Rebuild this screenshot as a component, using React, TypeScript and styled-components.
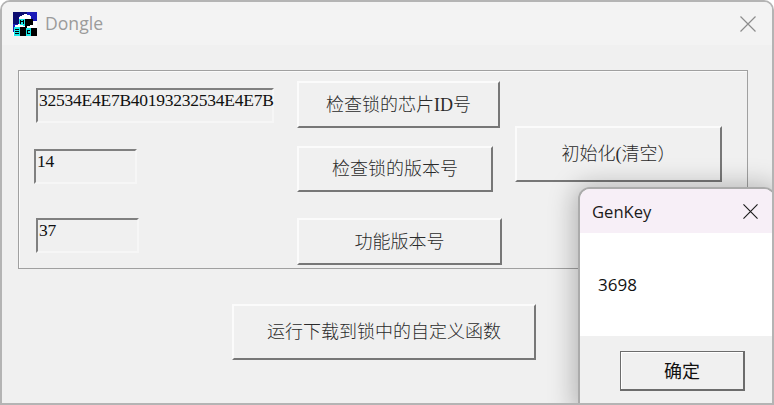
import React from "react";
import styled, { createGlobalStyle } from "styled-components";

const GlobalStyle = createGlobalStyle`
  html, body {
    margin: 0;
    padding: 0;
    background: #fff;
  }
`;

const DIALOG_FONT = `"Liberation Serif", "Noto Sans CJK SC", serif`;
const SYSTEM_FONT = `"Open Sans", "Noto Sans", sans-serif`;

const WindowFrame = styled.div`
  position: relative;
  width: 774px;
  height: 405px;
  box-sizing: border-box;
  overflow: hidden;
  background: #f0f0f0;
  border: 2px solid #b4b4b4;
  border-radius: 10px 10px 0 0;
`;

const TitleBar = styled.div`
  display: flex;
  align-items: center;
  height: 43px;
  padding: 0 16px 0 11px;
  box-sizing: border-box;
  background: #f3f3f3;
`;

const TitleText = styled.span`
  margin: -2px 0 0 8px;
  font-family: ${SYSTEM_FONT};
  font-size: 17.6px;
  color: #9b9b9b;
`;

const CloseButton = styled.button<{ $color: string }>`
  display: flex;
  margin-left: auto;
  padding: 0;
  border: 0;
  background: none;
  color: ${(p) => p.$color};
`;

const Body = styled.div`
  padding: 25px 0 0 16px;
`;

const GroupBox = styled.div`
  display: flex;
  width: 730px;
  height: 199px;
  padding-top: 10px;
  box-sizing: border-box;
  border: 1px solid #a0a0a0;
  box-shadow: inset 1px 1px 0 #fafafa;
`;

const FieldColumn = styled.div`
  display: flex;
  flex-direction: column;
  align-items: flex-start;
  width: 278px;
  padding-top: 7px;
`;

const Field = styled.div<{ $width: number; $indent: number; $gap: number }>`
  width: ${(p) => p.$width}px;
  height: 35px;
  margin: ${(p) => p.$gap}px 0 0 ${(p) => p.$indent}px;
  padding: 0 0 0 1px;
  box-sizing: border-box;
  border-style: solid;
  border-width: 2px;
  border-color: #808080 #f6f6f6 #f6f6f6 #808080;
  font-family: ${DIALOG_FONT};
  font-size: 17.5px;
  letter-spacing: -0.25px;
  line-height: 21px;
  color: #111;
  white-space: nowrap;
`;

const ButtonColumn = styled.div`
  display: flex;
  flex-direction: column;
  align-items: flex-start;
  width: 218px;
`;

const BevelButton = styled.button<{ $width: number; $height: number; $gap?: number }>`
  width: ${(p) => p.$width}px;
  height: ${(p) => p.$height}px;
  margin-top: ${(p) => p.$gap ?? 0}px;
  padding: 0 0 4px;
  box-sizing: border-box;
  background: #f0f0f0;
  border-style: solid;
  border-width: 2px;
  border-color: #fbfbfb #777 #777 #fbfbfb;
  font-family: ${DIALOG_FONT};
  font-size: 18px;
  font-weight: 300;
  color: #2a2a2a;
`;

const RunRow = styled.div`
  padding: 35px 0 0 214px;
`;

const MessageBox = styled.div`
  position: absolute;
  right: -2px;
  bottom: -2px;
  width: 194px;
  height: 216px;
  box-sizing: border-box;
  overflow: hidden;
  background: #f0f0f0;
  border-radius: 10px 10px 0 0;
`;

const MessageShadow = styled.div`
  position: absolute;
  right: -2px;
  bottom: -2px;
  width: 194px;
  height: 216px;
  border-radius: 10px 10px 0 0;
  box-shadow: 0 0 0 2px #ababab, 0 2px 26px 6px rgba(0, 0, 0, 0.26);
`;

const MessageTitle = styled.div`
  display: flex;
  align-items: center;
  height: 44px;
  padding: 0 16px 0 12px;
  box-sizing: border-box;
  background: #f7eff7;
  font-family: ${SYSTEM_FONT};
  font-size: 16.6px;
  color: #1a1a1a;
`;

const MessageText = styled.div`
  height: 103px;
  padding: 40px 0 0 18px;
  box-sizing: border-box;
  background: #fff;
  font-family: ${SYSTEM_FONT};
  font-size: 17px;
  line-height: 24px;
  color: #111;
`;

const MessageFooter = styled.div`
  padding: 15px 0 0 40px;
`;

const OkButton = styled.button`
  width: 125px;
  height: 40px;
  padding: 0 0 2px;
  box-sizing: border-box;
  background: #f0f0f0;
  border: 1px solid #6c6c6c;
  border-right-width: 2px;
  border-bottom-width: 2px;
  box-shadow: inset 1px 1px 0 #fff;
  font-family: ${DIALOG_FONT};
  font-size: 18px;
  color: #111;
`;

function CloseIcon({ size }: { size: number }) {
  return (
    <svg width={size} height={size} viewBox="0 0 16 16" fill="none" stroke="currentColor" strokeWidth="1.2">
      <path d="M0.5 0.5 15.5 15.5M15.5 0.5 0.5 15.5" />
    </svg>
  );
}

function AppIcon() {
  return (
    <svg width="24" height="24" viewBox="0 0 24 24" shapeRendering="crispEdges">
      <rect width="24" height="24" fill="#fff" />
      <path d="M0 0H24V9H18V14H12V12H5V20H0Z" fill="#1a1ab8" />
      <path d="M0 0H14V4H6V12H0Z" fill="#0c0c70" />
      <path d="M6 5 12 2 18 4 18 7 12 9 6 7Z" fill="#fff" />
      <path d="M12 7H20V16H12Z" fill="#000" />
      <path d="M6 7H12V14H6Z" fill="#1ce8e8" />
      <path d="M1 14 6 12 11 14 6 16Z" fill="#fff" />
      <path d="M13 15 18 13 24 15 18 17Z" fill="#fff" />
      <path d="M1 15H7V24H1Z" fill="#1ce8e8" />
      <path d="M7 15H13V24H7Z" fill="#000" />
      <path d="M13 16H18V24H13Z" fill="#1ce8e8" />
      <path d="M18 16H24V24H18Z" fill="#000" />
      <path d="M7 8H8V12H7ZM10 8H11V12H10ZM8 9H10V10H8Z" fill="#000" />
      <path d="M2 17H6V18H2ZM2 19H6V20H2ZM2 21H6V22H2Z" fill="#000" />
      <path d="M14 18H17V19H14ZM14 19H15V21H14ZM14 21H17V22H14Z" fill="#000" />
    </svg>
  );
}

export default function App() {
  return (
    <>
      <GlobalStyle />
      <WindowFrame>
        <TitleBar>
          <AppIcon />
          <TitleText>Dongle</TitleText>
          <CloseButton $color="#8c8c8c">
            <CloseIcon size={16} />
          </CloseButton>
        </TitleBar>
        <Body>
          <GroupBox>
            <FieldColumn>
              <Field $width={238} $indent={17} $gap={0}>32534E4E7B40193232534E4E7B</Field>
              <Field $width={103} $indent={15} $gap={26}>14</Field>
              <Field $width={103} $indent={17} $gap={34}>37</Field>
            </FieldColumn>
            <ButtonColumn>
              <BevelButton $width={203} $height={47}>检查锁的芯片ID号</BevelButton>
              <BevelButton $width={196} $height={46} $gap={18}>检查锁的版本号</BevelButton>
              <BevelButton $width={205} $height={47} $gap={26}>功能版本号</BevelButton>
            </ButtonColumn>
            <BevelButton $width={207} $height={56} $gap={45}>初始化(清空）</BevelButton>
          </GroupBox>
          <RunRow>
            <BevelButton $width={304} $height={56}>运行下载到锁中的自定义函数</BevelButton>
          </RunRow>
        </Body>
        <MessageShadow />
        <MessageBox>
          <MessageTitle>
            GenKey
            <CloseButton $color="#1a1a1a">
              <CloseIcon size={15} />
            </CloseButton>
          </MessageTitle>
          <MessageText>3698</MessageText>
          <MessageFooter>
            <OkButton>确定</OkButton>
          </MessageFooter>
        </MessageBox>
      </WindowFrame>
    </>
  );
}
